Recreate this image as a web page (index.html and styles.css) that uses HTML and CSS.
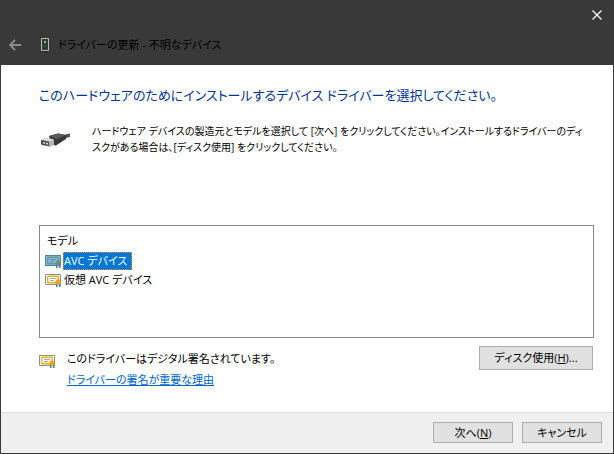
FILE: index.html
```html
<!DOCTYPE html>
<html lang="ja">
<head>
    <meta charset="UTF-8">
    <meta name="viewport" content="width=device-width, initial-scale=1.0">
    <title>ドライバーの更新 - 不明なデバイス</title>
    <link rel="stylesheet" href="styles.css">
</head>
<body>
    <svg width="0" height="0" class="defs" aria-hidden="true">
        <symbol id="cert" viewBox="0 0 16 14">
            <path d="M.5 1.5h15v10H.5z" fill="#fff" stroke="#8f8f8f"/>
            <rect x="2.7" y="3.2" width="10.6" height="6.6" rx="1" fill="#fffdf5" stroke="#e3b11c" stroke-width="1.4"/>
            <path d="M5 5.5h6M5 7.5h4" stroke="#a9a9a9"/>
            <path d="M11 10h1.5v4H11zM14 10h1.5v4H14z" fill="#2a7fc4"/>
            <circle cx="13" cy="9.3" r="2.7" fill="#eda30c"/>
        </symbol>
    </svg>

    <header>
        <div class="caption">
            <button type="button" class="close" aria-label="閉じる">
                <svg width="10" height="10" viewBox="0 0 10 10"><path d="M.5.5l9 9M9.5.5l-9 9" stroke="#fff" stroke-width="1.2"/></svg>
            </button>
        </div>
        <div class="title">
            <button type="button" class="back" aria-label="戻る" disabled>
                <svg width="12" height="12" viewBox="0 0 12 12"><path d="M12 6H1.5M6 1L1 6l5 5" fill="none" stroke="#8c8c8c" stroke-width="1.9"/></svg>
            </button>
            <svg width="8" height="14" viewBox="0 0 8 14"><path d="M.5.5h7v12h-7z" fill="#393939" stroke="#b9b9b9"/><path d="M1 13.5h6" stroke="#252525"/><path d="M3 3h2v2H3z" fill="#3cf03c"/></svg>
            <span>ドライバーの更新 - 不明なデバイス</span>
        </div>
    </header>

    <main>
        <h1>このハードウェアのためにインストールするデバイス ドライバーを選択してください。</h1>
        <div class="intro">
            <svg width="32" height="26" viewBox="0 0 32 26">
                <path d="M23 13l4-2 3-.5V14l-4 1-3 1.500z" fill="#555"/>
                <path d="M9 13l9-2.500 8 1.500v4l-10 6.500-5-1z" fill="#383838"/>
                <path d="M9 13l9-2.500 8 1.500-9 4z" fill="#5a5a5a"/>
                <path d="M1 17l6-2 7 1.500v5L10 24l-8-2-1-1z" fill="#b4b4b4"/>
                <path d="M1 17l6-2 7 1.500-5 2z" fill="#dcdcdc"/>
                <path d="M1 17l8 1.500V23l-7-1-1-1z" fill="#4a4a4a"/>
                <path d="M3 19l2 .4v1.600l-2-.4zM6 19.600l2 .4v1.600l-2-.4z" fill="#ddd"/>
            </svg>
            <p>ハードウェア デバイスの製造元とモデルを選択して [次へ] をクリックしてください。インストールするドライバーのディ<br>スクがある場合は、[ディスク使用] をクリックしてください。</p>
        </div>

        <div class="list">
            <table>
                <thead>
                    <tr><th scope="col">モデル</th></tr>
                </thead>
                <tbody>
                    <tr class="selected"><td><svg width="16" height="14"><use href="#cert"/><path d="M0 1h16v11H0z" fill="#0078d7" opacity="0.5"/></svg><span>AVC デバイス</span></td></tr>
                    <tr><td><svg width="16" height="14"><use href="#cert"/></svg><span>仮想 AVC デバイス</span></td></tr>
                </tbody>
            </table>
        </div>

        <div class="signed">
            <svg width="16" height="14"><use href="#cert"/></svg>
            <div class="signed-text">
                <p>このドライバーはデジタル署名されています。</p>
                <a href="#">ドライバーの署名が重要な理由</a>
            </div>
            <button type="button" class="btn disk">ディスク使用(<u>H</u>)...</button>
        </div>
    </main>

    <footer>
        <button type="button" class="btn">次へ(<u>N</u>)</button>
        <button type="button" class="btn">キャンセル</button>
    </footer>
</body>
</html>
```

FILE: styles.css
```css
* {
    box-sizing: border-box;
}
body {
    display: flex;
    flex-direction: column;
    min-height: 100vh;
    margin: 0;
    border: 1px solid #393939;
    background-color: #fff;
    color: #000;
    font: 11px/16px "Open Sans", "Noto Sans CJK JP", sans-serif;
    font-feature-settings: "palt";
}
h1, p {
    margin: 0;
}
button {
    font: inherit;
    font-feature-settings: inherit;
}
svg {
    display: block;
    flex: none;
}
.defs {
    position: absolute;
}
header {
    background-color: #393939;
}
.caption {
    display: flex;
    justify-content: flex-end;
}
.close, .back {
    display: flex;
    align-items: center;
    justify-content: center;
    padding: 0;
    border: none;
    background: none;
}
.close {
    width: 32px;
    height: 28px;
}
.title {
    display: flex;
    align-items: center;
    height: 36px;
    padding: 0 8px 4px;
}
.back {
    margin-right: 20px;
}
.title span {
    margin-left: 9px;
}
main {
    display: flex;
    flex-direction: column;
    flex: 1;
    padding: 20px 19px 24px 38px;
}
h1 {
    color: #003399;
    font-size: 13px;
    font-weight: normal;
    line-height: 20px;
}
.intro {
    display: flex;
    gap: 20px;
    padding: 18px 0 70px 1px;
}
.intro p {
    font-size: 10px;
}
.list {
    flex: 1;
    border: 1px solid #828790;
    padding: 4px;
}
table {
    border-collapse: collapse;
}
th {
    padding: 0 3px;
    height: 21px;
    font-weight: normal;
    text-align: left;
}
td {
    display: flex;
    align-items: center;
    gap: 2px;
    height: 19px;
    padding: 0 1px;
}
td span {
    padding: 1px 4px 1px 1px;
}
.selected span {
    padding: 0 4px 0 0;
    border: 1px dotted #ff8728;
    background-color: #0078d7;
    color: #fff;
}
.signed {
    display: flex;
    align-items: flex-start;
    padding-top: 8px;
}
.signed > svg {
    margin-top: 8px;
}
.signed-text {
    flex: 1;
    padding: 5px 0 0 12px;
}
.signed-text a {
    display: inline-block;
    margin-top: 5px;
    color: #0066cc;
}
.btn {
    min-width: 80px;
    height: 21px;
    padding: 0 8px;
    border: 1px solid #adadad;
    background-color: #e1e1e1;
    color: #000;
    line-height: 16px;
}
.disk {
    min-width: 114px;
    height: 24px;
    margin-right: 1px;
}
footer {
    display: flex;
    justify-content: flex-end;
    gap: 9px;
    padding: 9px 11px 10px;
    border-top: 1px solid #dfdfdf;
    background-color: #f0f0f0;
}
```
